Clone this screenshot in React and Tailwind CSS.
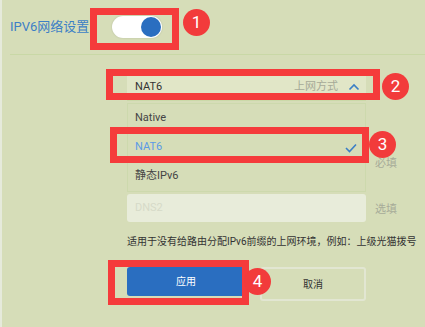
import React from "react";

const Marker = ({ n, className }) => (
  <div
    className={`absolute flex h-[27px] w-[27px] items-center justify-center rounded-full bg-[#f23b3b] text-[17px] text-white ${className}`}
  >
    {n}
  </div>
);

const Box = ({ className }) => (
  <div className={`absolute border-[7px] border-[#f53b3b] ${className}`} />
);

export default function App() {
  const opcoes = ["Native", "NAT6", "静态IPv6"];

  return (
    <div
      className="relative h-[327px] w-[425px] overflow-hidden border-l-[2px] border-[#e6eadb] bg-[#d6ddb8]"
      style={{ fontFamily: 'Roboto, "Noto Sans CJK SC", sans-serif' }}
    >
      {/* Cabeçalho */}
      <div className="ml-[8px] flex h-[55px] items-center border-b border-[#c9d8a6]">
        <span className="text-[13px] text-[#3d7fc6]">IPV6网络设置</span>
        <div className="ml-[23px] flex h-[22px] w-[50px] items-center justify-end rounded-full bg-white pr-[1px] shadow-[0_0_2px_rgba(0,0,0,0.15)]">
          <div className="h-[20px] w-[20px] rounded-full bg-[#2a6ec0]" />
        </div>
      </div>

      {/* Formulário */}
      <div className="ml-[125px] mt-[19px] flex gap-x-[9px]">
        <div className="w-[239px]">
          <div className="flex h-[27px] items-center border-b border-[#cbd9a9] bg-[#e1e6c7] pl-[8px] pr-[6px]">
            <span className="text-[11px] text-[#333]">NAT6</span>
            <span className="ml-auto text-[11px] text-[#a6aa98]">上网方式</span>
            <svg className="ml-[10px]" width="12" height="8" viewBox="0 0 12 8">
              <path d="M1.5 6.5 L6 2 L10.5 6.5" fill="none" stroke="#3b7fc6" strokeWidth="1.6" />
            </svg>
          </div>
          <div className="mt-[2px] border border-[#cdd9ad]">
            {opcoes.map((o, i) => (
              <div key={o} className="flex h-[29px] items-center pl-[7px] pr-[8px]">
                <span className={`text-[11px] ${i === 1 ? "text-[#5a9ae6]" : "text-[#444]"}`}>{o}</span>
                {i === 1 && (
                  <svg className="ml-auto" width="12" height="10" viewBox="0 0 12 10">
                    <path d="M1 5 L4.5 8.5 L11 1.5" fill="none" stroke="#3b7fc6" strokeWidth="1.6" />
                  </svg>
                )}
              </div>
            ))}
          </div>
          <div className="mt-[2px] flex h-[28px] items-center rounded-[3px] bg-[#e8ecda] pl-[8px]">
            <span className="text-[11px] text-[#d6dac8]">DNS2</span>
          </div>
        </div>
        <div className="flex flex-col pt-[82px] text-[11px] text-[#a7ab98]">
          <span>必填</span>
          <span className="mt-[29px]">选填</span>
        </div>
      </div>

      <p className="ml-[125px] mt-[12px] whitespace-nowrap text-[10px] text-[#333]">
        适用于没有给路由分配IPv6前缀的上网环境，例如：上级光猫拨号
      </p>

      {/* Botões */}
      <div className="ml-[125px] mt-[18px] flex gap-[15px]">
        <button className="h-[29px] w-[118px] rounded-[3px] bg-[#2a6ec0] text-[10px] text-white">应用</button>
        <button className="h-[34px] w-[106px] rounded-[3px] border-2 border-[#e2e6d2] text-[10px] text-[#333]">取消</button>
      </div>

      {/* Anotações */}
      <Box className="left-[88px] top-[8px] h-[42px] w-[89px]" />
      <Box className="left-[104px] top-[69px] h-[31px] w-[274px]" />
      <Box className="left-[108px] top-[127px] h-[36px] w-[259px]" />
      <Box className="left-[106px] top-[260px] h-[45px] w-[141px]" />
      <Marker n="1" className="left-[181px] top-[9px]" />
      <Marker n="2" className="left-[380px] top-[73px]" />
      <Marker n="3" className="left-[367px] top-[131px]" />
      <Marker n="4" className="left-[242px] top-[268px]" />
    </div>
  );
}
